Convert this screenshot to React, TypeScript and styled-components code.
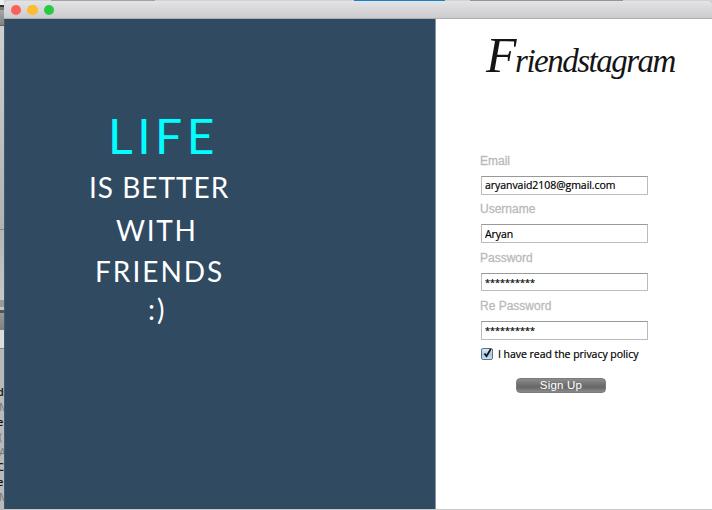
import React from "react";
import styled, { createGlobalStyle } from "styled-components";

const GlobalStyle = createGlobalStyle`
  * { box-sizing: border-box; }
  html, body { margin: 0; padding: 0; overflow: hidden; }
`;

const Desktop = styled.div`
  display: grid;
  grid-template-columns: 4px 708px;
  width: 712px;
  height: 510px;
  overflow: hidden;
  background: #b9b9b9;
`;

const Behind = styled.div`
  display: flex;
  flex-direction: column;
  overflow: hidden;
  font: 11px/15px "Open Sans", sans-serif;
`;

const Slab = styled.div<{ $h: number; $bg: string }>`
  flex: none;
  height: ${(p) => p.$h}px;
  background: ${(p) => p.$bg};
`;

const Peek = styled.div<{ $dim?: boolean }>`
  flex: none;
  height: 15px;
  width: 14px;
  color: ${(p) => (p.$dim ? "#777" : "#111")};
  font-weight: ${(p) => (p.$dim ? 400 : 600)};
  margin-left: ${(p) => (p.$dim ? -1 : -3)}px;
`;

const AppWindow = styled.div`
  display: grid;
  grid-template-rows: 1px 18px 490px 1px;
  background: #c9c9c9;
`;

const TopEdge = styled.div`
  background: linear-gradient(
    90deg,
    #d2d2d4 0 47px, #a3a2a5 47px 151px, #d2d2d4 151px 350px,
    #1580cb 350px 441px, #d2d2d4 441px 466px, #969496 466px 619px, #d2d2d4 619px
  );
`;

const TitleBar = styled.header`
  display: flex;
  align-items: center;
  gap: 6px;
  padding: 0 0 0 7px;
  border-radius: 4px 4px 0 0;
  border-bottom: 1px solid #aeaeae;
  background: linear-gradient(#e4e3e6, #cbcacd);
`;

const Light = styled.i<{ $c: string }>`
  width: 10.4px;
  height: 10.4px;
  margin-top: 1px;
  border-radius: 50%;
  background: ${(p) => p.$c};
`;

const Content = styled.main`
  display: grid;
  grid-template-columns: 432px 276px;
`;

const Banner = styled.section`
  display: flex;
  flex-direction: column;
  padding-top: 87px;
  background: #2f4a61;
  border-right: 1px solid #8494a2;
  border-left: 1px solid #3f596d;
`;

const Line = styled.div<{ $left: number; $size: number; $h: number; $gap: number; $c?: string }>`
  height: ${(p) => p.$h}px;
  line-height: ${(p) => p.$h}px;
  margin-left: ${(p) => p.$left}px;
  font-family: Lato, sans-serif;
  font-size: ${(p) => p.$size}px;
  letter-spacing: ${(p) => p.$gap}px;
  color: ${(p) => p.$c ?? "#fff"};
  white-space: nowrap;
`;

const SignUpPane = styled.section`
  display: flex;
  flex-direction: column;
  padding-left: 44px;
  background: #fff;
`;

const Brand = styled.h1`
  margin: 6px 0 0 6px;
  height: 129px;
  font: italic 400 33px/60px "Liberation Serif", serif;
  letter-spacing: -1.5px;
  color: #151515;
  white-space: nowrap;

  &::first-letter {
    font-size: 50px;
  }
`;

const Field = styled.label`
  display: flex;
  flex-direction: column;
  height: 48.4px;
`;

const Caption = styled.span`
  height: 22px;
  line-height: 15px;
  font-family: "Liberation Sans", sans-serif;
  font-size: 12px;
  color: #bababa;
  -webkit-text-stroke: 0.3px #bababa;
`;

const Input = styled.input<{ $masked?: boolean }>`
  width: 167px;
  height: 18.5px;
  margin-left: 1px;
  padding: ${(p) => (p.$masked ? 1 : 0)}px 0 0 3px;
  border: 1px solid #bcbcbc;
  border-top-color: #999;
  border-radius: 0;
  background: #fff;
  color: #000;
  font-family: "Open Sans", sans-serif;
  font-size: ${(p) => (p.$masked ? 9 : 10.5)}px;
  letter-spacing: ${(p) => (p.$masked ? 0.05 : -0.05)}px;
  -webkit-text-stroke: 0.2px #000;
  outline: none;
`;

const Consent = styled.label`
  display: flex;
  align-items: center;
  gap: 5px;
  height: 15px;
  margin: -1px 0 0 1px;
  font-family: "Open Sans", sans-serif;
  font-size: 10.5px;
  letter-spacing: -0.04px;
  color: #000;
  -webkit-text-stroke: 0.2px #000;
  white-space: nowrap;
`;

const Box = styled.span`
  display: block;
  flex: none;
  width: 12px;
  height: 12px;
  border: 1px solid #59738b;
  border-radius: 2px;
  background: linear-gradient(#dcebf6, #a9c9e1 55%, #c8e4f5);

  svg { display: block; overflow: visible; margin: -2px 0 0 0; }
`;

const Submit = styled.button`
  width: 90px;
  height: 15px;
  margin: 16px 0 0 36px;
  padding: 0 0 1px;
  border: 1px solid #777d80;
  border-radius: 4px;
  background: linear-gradient(#8c8c8c, #6d6d6d 50%, #686868 65%, #8b8b8b);
  color: #fff;
  font: 11.5px/12px "Liberation Sans", sans-serif;
  letter-spacing: 0.2px;
`;

const fields = [
  { label: "Email", value: "aryanvaid2108@gmail.com" },
  { label: "Username", value: "Aryan" },
  { label: "Password", value: "**********", masked: true },
  { label: "Re Password", value: "**********", masked: true },
];

export default function App() {
  return (
    <Desktop>
      <GlobalStyle />
      <Behind>
        <Slab $h={5} $bg="#eeeeee" />
        <Slab $h={2} $bg="#333333" />
        <Slab $h={3} $bg="#777777" />
        <Slab $h={15} $bg="linear-gradient(#a7a7a7,#828282)" />
        <Slab $h={1} $bg="#5f5f5f" />
        <Slab $h={203} $bg="linear-gradient(#cfcfcf,#b2b2b2)" />
        <Slab $h={1} $bg="#858585" />
        <Slab $h={70} $bg="linear-gradient(#b5b5b5,#c7c7c7)" />
        <Slab $h={7} $bg="#999999" />
        <Slab $h={3} $bg="#c4c4c4" />
        <Slab $h={3} $bg="#555555" />
        <Slab $h={17} $bg="linear-gradient(#999,#808080)" />
        <Slab $h={18} $bg="#dddddd" />
        <Slab $h={1} $bg="#858585" />
        <Slab $h={35} $bg="#b9b9b9" />
        <Peek>d</Peek>
        <Peek $dim>M</Peek>
        <Peek>e</Peek>
        <Peek $dim>(</Peek>
        <Peek $dim>A</Peek>
        <Peek>Cl</Peek>
        <Peek>e</Peek>
        <Peek $dim>M</Peek>
      </Behind>
      <AppWindow>
        <TopEdge />
        <TitleBar>
          <Light $c="#fc605b" />
          <Light $c="#fdbc2e" />
          <Light $c="#28ca42" />
        </TitleBar>
        <Content>
          <Banner>
            <Line $left={103} $size={48} $h={60} $gap={4.5} $c="#00ffff">LIFE</Line>
            <Line $left={84} $size={28} $h={43} $gap={1}>IS BETTER</Line>
            <Line $left={111} $size={28} $h={43} $gap={1.7}>WITH</Line>
            <Line $left={90} $size={28} $h={38} $gap={2}>FRIENDS</Line>
            <Line $left={143} $size={28} $h={39} $gap={2}>:)</Line>
          </Banner>
          <SignUpPane>
            <Brand>Friendstagram</Brand>
            {fields.map((f) => (
              <Field key={f.label}>
                <Caption>{f.label}</Caption>
                <Input $masked={f.masked} defaultValue={f.value} spellCheck={false} />
              </Field>
            ))}
            <Consent>
              <Box>
                <svg width="11" height="12" viewBox="0 0 11 12" fill="none">
                  <path d="M2.5 6.5 L4.5 9.3 L8.8 2" stroke="#111" strokeWidth="1.7" />
                </svg>
              </Box>
              I have read the privacy policy
            </Consent>
            <Submit type="button">Sign Up</Submit>
          </SignUpPane>
        </Content>
      </AppWindow>
    </Desktop>
  );
}
